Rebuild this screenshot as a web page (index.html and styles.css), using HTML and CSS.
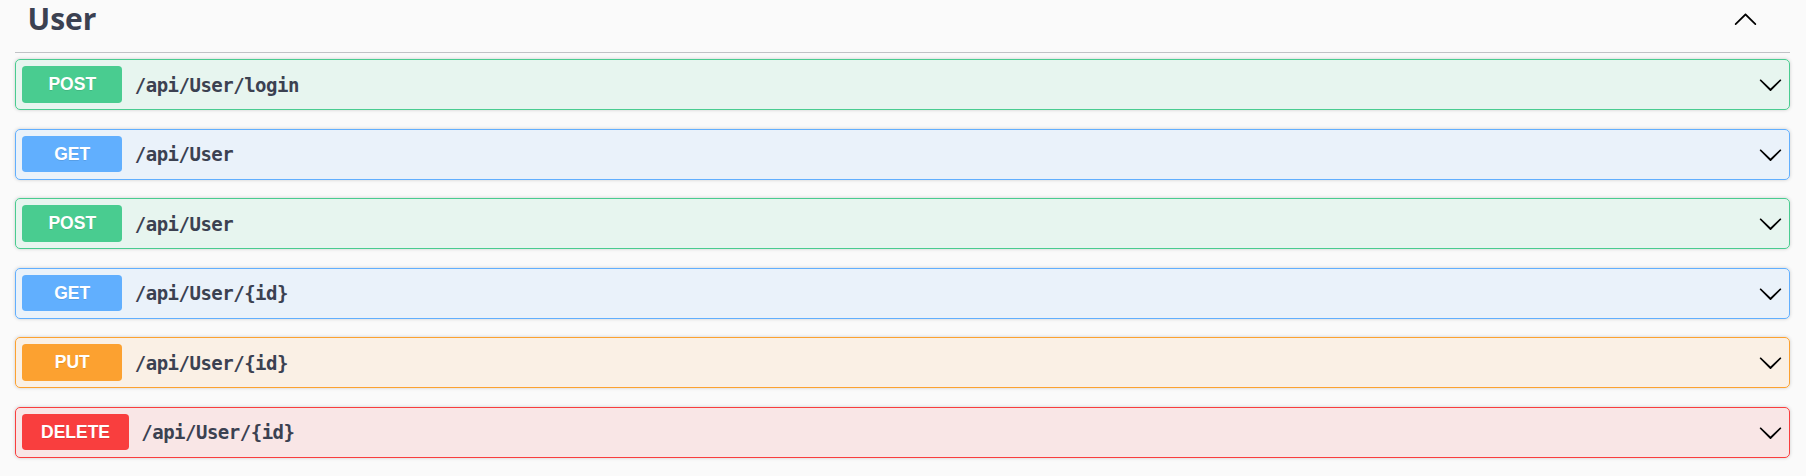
FILE: index.html
```html
<!DOCTYPE html>
<html>
<head>
<meta charset="utf-8">
<link rel="stylesheet" href="styles.css">
</head>
<body>
<div class="wrapper">
  <div class="tag-section">
    <h3 class="opblock-tag">
      <span class="tag-name">User</span>
      <button class="expand-op" aria-label="collapse">
        <svg width="25" height="25" viewBox="0 0 20 20"><path d="M17.418 14.908c.272.268.709.268.979 0s.271-.701 0-.969l-7.908-7.83c-.27-.268-.707-.268-.979 0l-7.908 7.83c-.27.268-.27.701 0 .969.271.268.709.268.979 0L10 7.767l7.418 7.141z"/></svg>
      </button>
    </h3>
    <div class="ops">
      <div class="opblock post">
        <span class="method">POST</span><span class="path">/api/User/login</span>
        <svg class="arrow" width="25" height="25" viewBox="0 0 20 20"><path d="M17.418 6.109c.272-.268.709-.268.979 0s.271.701 0 .969l-7.908 7.83c-.27.268-.707.268-.979 0l-7.908-7.83c-.27-.268-.27-.701 0-.969.271-.268.709-.268.979 0L10 13.25l7.418-7.141z"/></svg>
      </div>
      <div class="opblock get">
        <span class="method">GET</span><span class="path">/api/User</span>
        <svg class="arrow" width="25" height="25" viewBox="0 0 20 20"><path d="M17.418 6.109c.272-.268.709-.268.979 0s.271.701 0 .969l-7.908 7.83c-.27.268-.707.268-.979 0l-7.908-7.83c-.27-.268-.27-.701 0-.969.271-.268.709-.268.979 0L10 13.25l7.418-7.141z"/></svg>
      </div>
      <div class="opblock post">
        <span class="method">POST</span><span class="path">/api/User</span>
        <svg class="arrow" width="25" height="25" viewBox="0 0 20 20"><path d="M17.418 6.109c.272-.268.709-.268.979 0s.271.701 0 .969l-7.908 7.83c-.27.268-.707.268-.979 0l-7.908-7.830c-.27-.268-.27-.701 0-.969.271-.268.709-.268.979 0L10 13.25l7.418-7.141z"/></svg>
      </div>
      <div class="opblock get">
        <span class="method">GET</span><span class="path">/api/User/{id}</span>
        <svg class="arrow" width="25" height="25" viewBox="0 0 20 20"><path d="M17.418 6.109c.272-.268.709-.268.979 0s.271.701 0 .969l-7.908 7.83c-.27.268-.707.268-.979 0l-7.908-7.83c-.27-.268-.27-.701 0-.969.271-.268.709-.268.979 0L10 13.25l7.418-7.141z"/></svg>
      </div>
      <div class="opblock put">
        <span class="method">PUT</span><span class="path">/api/User/{id}</span>
        <svg class="arrow" width="25" height="25" viewBox="0 0 20 20"><path d="M17.418 6.109c.272-.268.709-.268.979 0s.271.701 0 .969l-7.908 7.83c-.27.268-.707.268-.979 0l-7.908-7.83c-.27-.268-.27-.701 0-.969.271-.268.709-.268.979 0L10 13.25l7.418-7.141z"/></svg>
      </div>
      <div class="opblock delete">
        <span class="method">DELETE</span><span class="path">/api/User/{id}</span>
        <svg class="arrow" width="25" height="25" viewBox="0 0 20 20"><path d="M17.418 6.109c.272-.268.709-.268.979 0s.271.701 0 .969l-7.908 7.83c-.27.268-.707.268-.979 0l-7.908-7.83c-.27-.268-.27-.701 0-.969.271-.268.709-.268.979 0L10 13.25l7.418-7.141z"/></svg>
      </div>
    </div>
  </div>
</div>
</body>
</html>
```

FILE: styles.css
```css
html, body {
  margin: 0;
  padding: 0;
  background: #fafafa;
}

.wrapper {
  padding: 0 16px 0 15px;
}

.opblock-tag {
  margin: 0 0 6px;
  box-sizing: border-box;
  height: 53px;
  display: flex;
  align-items: center;
  padding: 1px 32px 16px 12.5px;
  border-bottom: 1px solid rgba(59, 65, 81, 0.3);
  font-family: "Open Sans", "Noto Sans", sans-serif;
  font-size: 30px;
  font-weight: 700;
  color: #3b4151;
}

.tag-name {
  flex: 1;
  line-height: 36px;
}

.expand-op {
  background: none;
  border: none;
  padding: 0;
  margin: 0;
  display: flex;
  align-items: center;
}

.expand-op svg,
.arrow {
  fill: #000;
  display: block;
}

.opblock {
  display: flex;
  align-items: center;
  box-sizing: border-box;
  height: 51px;
  margin: 0 0 18.5px;
  padding: 0 6.25px;
  border: 1px solid #000;
  border-radius: 5px;
  box-shadow: 0 0 3.75px rgba(0, 0, 0, 0.19);
}

.method {
  box-sizing: border-box;
  min-width: 100px;
  height: 36.5px;
  padding: 0 18.75px;
  display: flex;
  align-items: center;
  justify-content: center;
  border-radius: 3.75px;
  font-family: "Liberation Sans", Arial, sans-serif;
  font-size: 17.5px;
  font-weight: 700;
  color: #fff;
  text-shadow: 0 1px 0 rgba(0, 0, 0, 0.1);
}

.path {
  flex: 1;
  padding: 0 12.5px;
  font-family: "DejaVu Sans Mono", "Liberation Mono", monospace;
  font-size: 19px;
  letter-spacing: -0.5px;
  font-weight: 700;
  color: #3b4151;
}

.post {
  background: rgba(73, 204, 144, 0.1);
  border-color: #49cc90;
}
.post .method { background: #49cc90; }

.get {
  background: rgba(97, 175, 254, 0.1);
  border-color: #61affe;
}
.get .method { background: #61affe; }

.put {
  background: rgba(252, 161, 48, 0.1);
  border-color: #fca130;
}
.put .method { background: #fca130; }

.delete {
  background: rgba(249, 62, 62, 0.1);
  border-color: #f93e3e;
}
.delete .method { background: #f93e3e; }
```
